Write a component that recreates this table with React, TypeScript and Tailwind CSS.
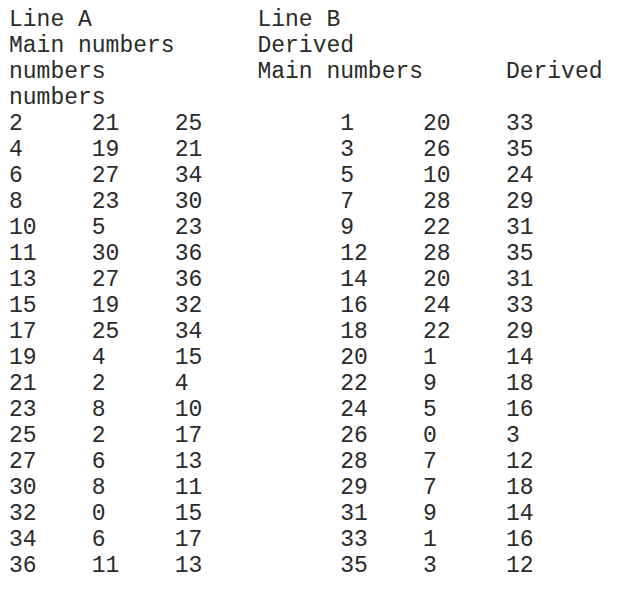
import React from 'react';

const rows: number[][] = [
  [2, 21, 25, 1, 20, 33],
  [4, 19, 21, 3, 26, 35],
  [6, 27, 34, 5, 10, 24],
  [8, 23, 30, 7, 28, 29],
  [10, 5, 23, 9, 22, 31],
  [11, 30, 36, 12, 28, 35],
  [13, 27, 36, 14, 20, 31],
  [15, 19, 32, 16, 24, 33],
  [17, 25, 34, 18, 22, 29],
  [19, 4, 15, 20, 1, 14],
  [21, 2, 4, 22, 9, 18],
  [23, 8, 10, 24, 5, 16],
  [25, 2, 17, 26, 0, 3],
  [27, 6, 13, 28, 7, 12],
  [30, 8, 11, 29, 7, 18],
  [32, 0, 15, 31, 9, 14],
  [34, 6, 17, 33, 1, 16],
  [36, 11, 13, 35, 3, 12],
];

export default function App() {
  return (
    <div className="min-h-screen bg-white pl-[9px] pt-[7px] text-[#2a2a2a] font-['Liberation_Mono','Courier_New',monospace] text-[23px] leading-[26px]">
      <div className="grid grid-cols-[repeat(7,6ch)] whitespace-nowrap">
        {/* header block */}
        <div className="col-span-3">Line A</div>
        <div className="col-span-3">Line B</div>
        <div />
        <div className="col-span-3">Main numbers</div>
        <div className="col-span-3">Derived</div>
        <div />
        <div className="col-span-3">numbers</div>
        <div className="col-span-3">Main numbers</div>
        <div>Derived</div>
        <div className="col-span-7">numbers</div>

        {/* data rows */}
        {rows.map((r, i) => (
          <React.Fragment key={i}>
            <div>{r[0]}</div>
            <div>{r[1]}</div>
            <div>{r[2]}</div>
            <div />
            <div>{r[3]}</div>
            <div>{r[4]}</div>
            <div>{r[5]}</div>
          </React.Fragment>
        ))}
      </div>
    </div>
  );
}
